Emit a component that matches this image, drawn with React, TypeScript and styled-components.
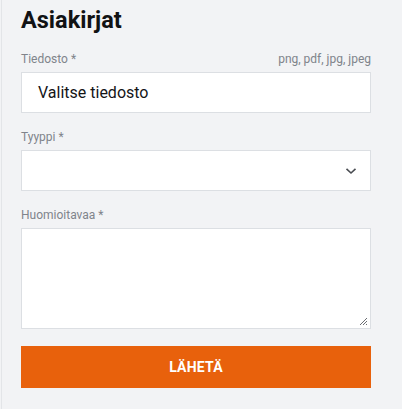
import styled, { createGlobalStyle } from 'styled-components';

const GlobalStyle = createGlobalStyle`
  html, body {
    margin: 0;
    padding: 0;
    background: #f2f3f5;
    font-family: Roboto, 'Liberation Sans', sans-serif;
  }
`;

const Page = styled.div`
  min-height: 409px;
  box-sizing: border-box;
  margin-left: 1px;
  border-left: 1px solid #e3e5e8;
  padding: 7px 0 0 19px;
`;

const Form = styled.form`
  width: 350px;
  display: flex;
  flex-direction: column;
`;

const Title = styled.h2`
  margin: 0 0 18px;
  font-size: 23.5px;
  font-weight: 700;
  line-height: 27px;
  color: #111214;
`;

const Field = styled.div`
  display: flex;
  flex-direction: column;
  margin-bottom: 17px;
`;

const LabelRow = styled.div`
  display: flex;
  justify-content: space-between;
  align-items: baseline;
  height: 15px;
  margin-bottom: 5px;
  font-size: 12px;
  line-height: 15px;
  color: #80848b;
`;

const Hint = styled.span`
  color: #80848b;
`;

const Box = styled.div<{ $height?: number }>`
  position: relative;
  box-sizing: border-box;
  height: ${(props) => props.$height ?? 41}px;
  background: #ffffff;
  border: 1px solid #dcdfe3;
  display: flex;
  align-items: center;
  padding: 0 16px;
  font-size: 16px;
  color: #141517;
`;

const Chevron = styled.svg`
  margin-left: auto;
  margin-right: -3px;
`;

const Grip = styled.svg`
  position: absolute;
  right: 2px;
  bottom: 2px;
`;

const SubmitButton = styled.button`
  height: 42px;
  border: none;
  background: #e8610c;
  color: #ffffff;
  font-family: Roboto, 'Liberation Sans', sans-serif;
  font-size: 14px;
  font-weight: 700;
  letter-spacing: 0.2px;
  text-transform: uppercase;
  cursor: pointer;
`;

const App = (): JSX.Element => {
  return (
    <>
      <GlobalStyle />
      <Page>
        <Form>
          <Title>Asiakirjat</Title>
          <Field>
            <LabelRow>
              <span>Tiedosto *</span>
              <Hint>png, pdf, jpg, jpeg</Hint>
            </LabelRow>
            <Box>Valitse tiedosto</Box>
          </Field>
          <Field>
            <LabelRow>
              <span>Tyyppi *</span>
            </LabelRow>
            <Box>
              <Chevron width="12" height="8" viewBox="0 0 12 8">
                <path d="M1.5 1.8 L6 6 L10.5 1.8" fill="none" stroke="#4a4d52" strokeWidth="1.6" />
              </Chevron>
            </Box>
          </Field>
          <Field>
            <LabelRow>
              <span>Huomioitavaa *</span>
            </LabelRow>
            <Box $height={101}>
              <Grip width="9" height="9" viewBox="0 0 9 9">
                <path d="M1 8 L8 1 M4 8 L8 4 M7 8 L8 7" stroke="#6b6e73" strokeWidth="1" />
              </Grip>
            </Box>
          </Field>
          <SubmitButton type="button">Lähetä</SubmitButton>
        </Form>
      </Page>
    </>
  );
};

export default App;
